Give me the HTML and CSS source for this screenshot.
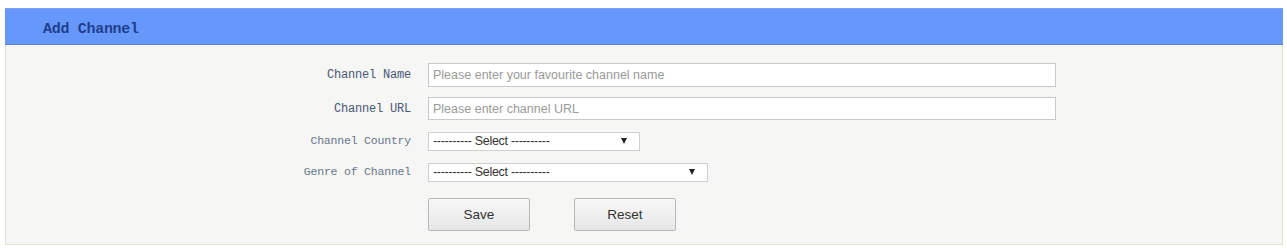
FILE: index.html
```html
<!DOCTYPE html>
<html>
<head>
<meta charset="utf-8">
<link rel="stylesheet" href="styles.css">
</head>
<body>
<div class="panel">
  <div class="panel-head">Add Channel</div>
  <form class="panel-body">
    <label class="lbl row1">Channel Name</label>
    <input class="txt row1" type="text" placeholder="Please enter your favourite channel name">
    <label class="lbl row2">Channel URL</label>
    <input class="txt txt-b row2" type="text" placeholder="Please enter channel URL">
    <label class="lbl lbl-sm row3">Channel Country</label>
    <span class="sel sel-a row3"><select><option>---------- Select ----------</option></select></span>
    <label class="lbl lbl-sm row4">Genre of Channel</label>
    <span class="sel sel-b row4"><select><option>---------- Select ----------</option></select></span>
    <div class="actions">
      <button type="button" class="btn">Save</button>
      <button type="button" class="btn">Reset</button>
    </div>
  </form>
</div>
</body>
</html>
```

FILE: styles.css
```css
html, body {
  margin: 0;
  padding: 0;
  background: #ffffff;
}
body {
  padding: 8px 4px 3px 5px;
}
.panel {
  border: 1px solid #e6e1cc;
  border-top: none;
  background: #f6f6f4;
  height: 237px;
  box-sizing: border-box;
  display: flex;
  flex-direction: column;
}
.panel-head {
  height: 37px;
  background: #6698fb;
  border-top: 1px solid #7aa4f2;
  border-bottom: 1px solid #5a86e0;
  box-sizing: border-box;
  margin: 0 -1px;
  padding: 5px 0 0 38px;
  display: flex;
  align-items: center;
  font-family: "Liberation Mono", monospace;
  font-size: 15px;
  font-weight: 600;
  letter-spacing: -0.3px;
  color: #1f3f8e;
}
.panel-body {
  display: grid;
  grid-template-columns: 405px 628px;
  grid-auto-rows: auto;
  row-gap: 0;
  column-gap: 17px;
  padding-top: 18px;
  margin: 0;
}
.panel-body .row2 { margin-top: 10px; }
.panel-body .row3 { margin-top: 11px; }
.panel-body .row4 { margin-top: 12px; }
.lbl {
  grid-column: 1;
  justify-self: end;
  align-self: center;
  font-family: "Liberation Mono", monospace;
  font-size: 12px;
  color: #4a5874;
  letter-spacing: -0.2px;
}
.lbl-sm {
  font-size: 11.5px;
  color: #66768c;
}
.txt {
  grid-column: 2;
  height: 24px;
  box-sizing: border-box;
  border: 1px solid #c9c9c9;
  background: #ffffff;
  padding: 0 4px;
  font-family: "Liberation Sans", Arial, sans-serif;
  font-size: 12.5px;
  color: #333;
  outline: none;
}
.txt-b {
  height: 23px;
}
.txt::placeholder {
  color: #9a9a9a;
}
.sel {
  grid-column: 2;
  position: relative;
  display: block;
  height: 19px;
}
.sel-a { width: 212px; }
.sel-b { width: 280px; }
.sel select {
  appearance: none;
  -webkit-appearance: none;
  width: 100%;
  height: 19px;
  box-sizing: border-box;
  border: 1px solid #cfcfcf;
  background: #ffffff;
  padding: 0 0 0 4px;
  font-family: "Liberation Sans", Arial, sans-serif;
  font-size: 12.5px;
  color: #333;
  letter-spacing: -0.3px;
  outline: none;
}
.sel::after {
  content: "";
  position: absolute;
  right: 13px;
  top: 7px;
  border-left: 3.5px solid transparent;
  border-right: 3.5px solid transparent;
  border-top: 6px solid #222;
}
.actions {
  grid-column: 2;
  display: flex;
  gap: 44px;
  margin-top: 17px;
  height: 33px;
}
.btn {
  width: 102px;
  height: 33px;
  border: 1px solid #b8b8b8;
  border-radius: 2px;
  background: linear-gradient(#f8f8f8, #e6e6e6);
  font-family: "Liberation Sans", Arial, sans-serif;
  font-size: 13.5px;
  color: #333;
  padding: 0;
}
```
